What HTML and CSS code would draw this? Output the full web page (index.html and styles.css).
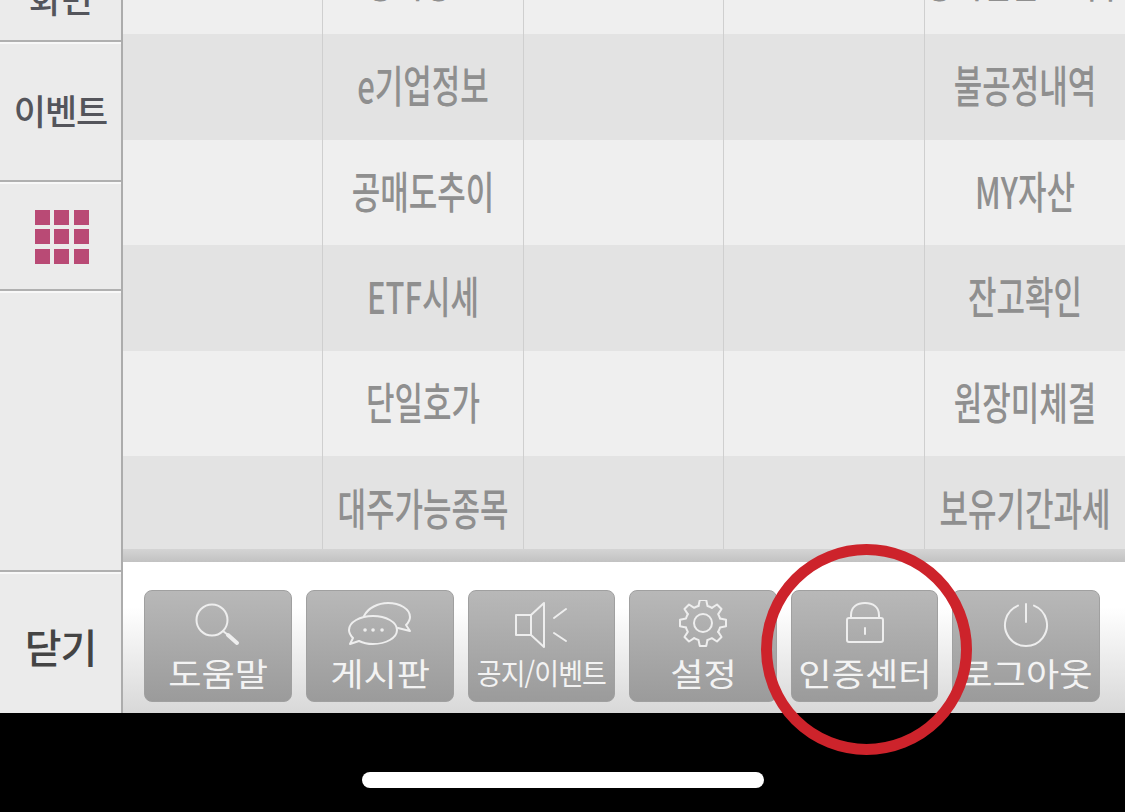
FILE: index.html
```html
<!DOCTYPE html>
<html lang="ko">
<head>
  <meta charset="UTF-8" />
  <meta name="viewport" content="width=device-width, initial-scale=1.0"/>
  <title>전체메뉴</title>
  <link rel="stylesheet" href="styles.css">
</head>
<body>

  <div class="screen">
    <!-- 왼쪽 탭 -->
    <aside class="side">
      <a class="side-item side-first">화면</a>
      <a class="side-item side-event">이벤트</a>
      <a class="side-item side-grid">
        <span class="dots">
          <i></i><i></i><i></i>
          <i></i><i></i><i></i>
          <i></i><i></i><i></i>
        </span>
      </a>
      <div class="side-item side-space"></div>
      <a class="side-item side-close">닫기</a>
    </aside>

    <main class="main">
      <!-- 메뉴 표 -->
      <section class="menu">
        <div class="menu-rows">
          <div class="row"><div class="cell"></div><div class="cell"><span>공시정보</span></div><div class="cell"></div><div class="cell"></div><div class="cell"><span>공시별잔고매수</span></div></div>
          <div class="row"><div class="cell"></div><div class="cell"><span>e기업정보</span></div><div class="cell"></div><div class="cell"></div><div class="cell"><span>불공정내역</span></div></div>
          <div class="row"><div class="cell"></div><div class="cell"><span>공매도추이</span></div><div class="cell"></div><div class="cell"></div><div class="cell"><span>MY자산</span></div></div>
          <div class="row"><div class="cell"></div><div class="cell"><span>ETF시세</span></div><div class="cell"></div><div class="cell"></div><div class="cell"><span>잔고확인</span></div></div>
          <div class="row"><div class="cell"></div><div class="cell"><span>단일호가</span></div><div class="cell"></div><div class="cell"></div><div class="cell"><span>원장미체결</span></div></div>
          <div class="row"><div class="cell"></div><div class="cell"><span>대주가능종목</span></div><div class="cell"></div><div class="cell"></div><div class="cell"><span>보유기간과세</span></div></div>
        </div>
      </section>

      <!-- 하단 버튼 -->
      <nav class="tools">
        <a class="tool">
          <svg class="tool-icon" viewBox="0 0 64 50">
            <circle cx="26" cy="20" r="15.5"/>
            <path d="M37 31l5 4"/>
            <path class="thick" d="M42 35l9 8"/>
          </svg>
          <span class="tool-label">도움말</span>
        </a>
        <a class="tool">
          <svg class="tool-icon" viewBox="0 0 64 50">
            <path d="M16 16C20 8 30 3 40 3c12 0 22 6 22 14 0 4-2 6-4 8l4 6-12-3"/>
            <path d="M5 38C2 35 1 33 1 30c0-8 11-14 24-14s24 6 24 14-11 14-24 14c-5 0-10-1-14-3l-9 3z"/>
            <path class="dotted" d="M17 30h.1M25 30h.1M34 30h.1"/>
          </svg>
          <span class="tool-label">게시판</span>
        </a>
        <a class="tool">
          <svg class="tool-icon" viewBox="0 0 64 50">
            <path d="M22 15H7v20h15"/>
            <path d="M22 15L35 3v44L22 35z"/>
            <path d="M45 18l12-9M45 33l12 8"/>
          </svg>
          <span class="tool-label label-narrow">공지/이벤트</span>
        </a>
        <a class="tool">
          <svg class="tool-icon" viewBox="-32 -23 64 50">
            <circle r="9"/>
            <g>
              <path id="tooth" d="M-4.5-17L-3.2-23H3.2L4.5-17Q6.8-16.4 8.84-15.2"/>
              <use href="#tooth" transform="rotate(45)"/>
              <use href="#tooth" transform="rotate(90)"/>
              <use href="#tooth" transform="rotate(135)"/>
              <use href="#tooth" transform="rotate(180)"/>
              <use href="#tooth" transform="rotate(225)"/>
              <use href="#tooth" transform="rotate(270)"/>
              <use href="#tooth" transform="rotate(315)"/>
            </g>
          </svg>
          <span class="tool-label">설정</span>
        </a>
        <a class="tool">
          <svg class="tool-icon" viewBox="0 0 64 50">
            <rect x="14" y="18" width="36" height="24" rx="2"/>
            <path d="M18 18v-3C18 7 24 3 32 3s14 4 14 12v3"/>
            <path d="M32 28v6"/>
          </svg>
          <span class="tool-label">인증센터</span>
        </a>
        <a class="tool">
          <svg class="tool-icon" viewBox="0 0 64 50">
            <path d="M24 5.6a21 21 0 1 0 16 0"/>
            <path d="M32 4v18"/>
          </svg>
          <span class="tool-label">로그아웃</span>
        </a>
      </nav>
    </main>
  </div>

  <div class="home-bar"><div class="home-line"></div></div>

  <!-- 빨간 표시 -->
  <div class="mark"></div>

</body>
</html>
```

FILE: styles.css
```css
* { box-sizing: border-box; margin: 0; padding: 0; }
html, body { height: 100%; }
body {
  position: relative;
  display: flex;
  flex-direction: column;
  height: 812px;
  overflow: hidden;
  background: #000;
  font-family: "Noto Sans CJK KR", "Noto Sans", sans-serif;
}

.screen {
  display: flex;
  height: 713px;
  overflow: hidden;
}

/* --- 왼쪽 탭 --- */
.side {
  display: flex;
  flex-direction: column;
  flex: 0 0 123px;
  background: #ebebeb;
  border-right: 2px solid #acacac;
}
.side-item {
  display: flex;
  align-items: center;
  justify-content: center;
  border-bottom: 2px solid #b0b0b0;
  box-shadow: inset 0 2px 0 #f8f8f8;
  color: #54555b;
  font-size: 35px;
  font-weight: 500;
  letter-spacing: -1px;
}
.side-first { height: 86px; margin-top: -44px; box-shadow: none; padding-bottom: 2px; }
.side-event { height: 140px; padding-bottom: 4px; }
.side-grid { height: 109px; padding-top: 2px; padding-left: 2px; }
.side-space { flex: 1; }
.side-close {
  height: 141px;
  border-bottom: none;
  color: #444;
  font-size: 40px;
  padding: 6px 0 0 0;
}

.dots {
  display: grid;
  grid-template-columns: repeat(3, 15px);
  grid-auto-rows: 15px;
  gap: 4.5px;
}
.dots i { background: #b94a75; }

.main {
  display: flex;
  flex-direction: column;
  flex: 1;
  min-width: 0;
}

/* --- 메뉴 표 --- */
.menu {
  position: relative;
  height: 562px;
  overflow: hidden;
}
.menu::after {
  content: "";
  position: absolute;
  left: 0; right: 0; bottom: 0;
  height: 13px;
  background: linear-gradient(#d4d4d4, #c2c2c2);
}
.menu-rows { margin-top: -71.6px; }
.row {
  display: grid;
  grid-template-columns: 200px 201px 200px 201px 200px;
  height: 105.6px;
  background: #efefef;
}
.row:nth-child(even) { background: #e3e3e3; }
.cell {
  display: flex;
  align-items: center;
  justify-content: center;
  padding-bottom: 6px;
  border-right: 1px solid #cfcfcf;
  color: #8f8f8f;
  font-size: 31px;
  font-weight: 500;
  white-space: nowrap;
}
.cell:last-child { border-right: none; }
.cell span {
  display: inline-block;
  transform: scaleY(1.42);
}

/* --- 하단 버튼 --- */
.tools {
  display: flex;
  gap: 14px;
  flex: 1;
  padding: 28px 25px 11px 21.3px;
  background: linear-gradient(#fff 0, #fff 30%, #d8d8d8 100%);
}
.tool {
  display: flex;
  flex-direction: column;
  align-items: center;
  flex: 1;
  padding-top: 9px;
  border: 1px solid #a0a0a0;
  border-radius: 8px;
  background: linear-gradient(#b8b8b8, #9b9b9b);
}
.tool-icon {
  flex: none;
  width: 64px;
  height: 50px;
  fill: none;
  stroke: #eee;
  stroke-width: 2;
  stroke-linecap: round;
  stroke-linejoin: round;
}
.tool-icon .thick { stroke-width: 4; }
.tool-icon .dotted { stroke-width: 3.5; }
.tool-label {
  margin-top: 2px;
  color: #f3f3f3;
  font-size: 32px;
  line-height: 40px;
  white-space: nowrap;
  transform: scaleX(1.13);
}
.tool-label.label-narrow {
  font-size: 29px;
  letter-spacing: -1px;
  transform: scaleX(.93);
}

/* --- 홈 인디케이터 --- */
.home-bar {
  display: flex;
  justify-content: center;
  flex: 1;
  padding-top: 59px;
  background: #000;
}
.home-line {
  width: 402px;
  height: 16px;
  border-radius: 8px;
  background: #fff;
}

.mark {
  position: absolute;
  left: 761px;
  top: 544px;
  width: 211px;
  height: 211px;
  border: 11px solid #cd232b;
  border-radius: 50%;
}
```
